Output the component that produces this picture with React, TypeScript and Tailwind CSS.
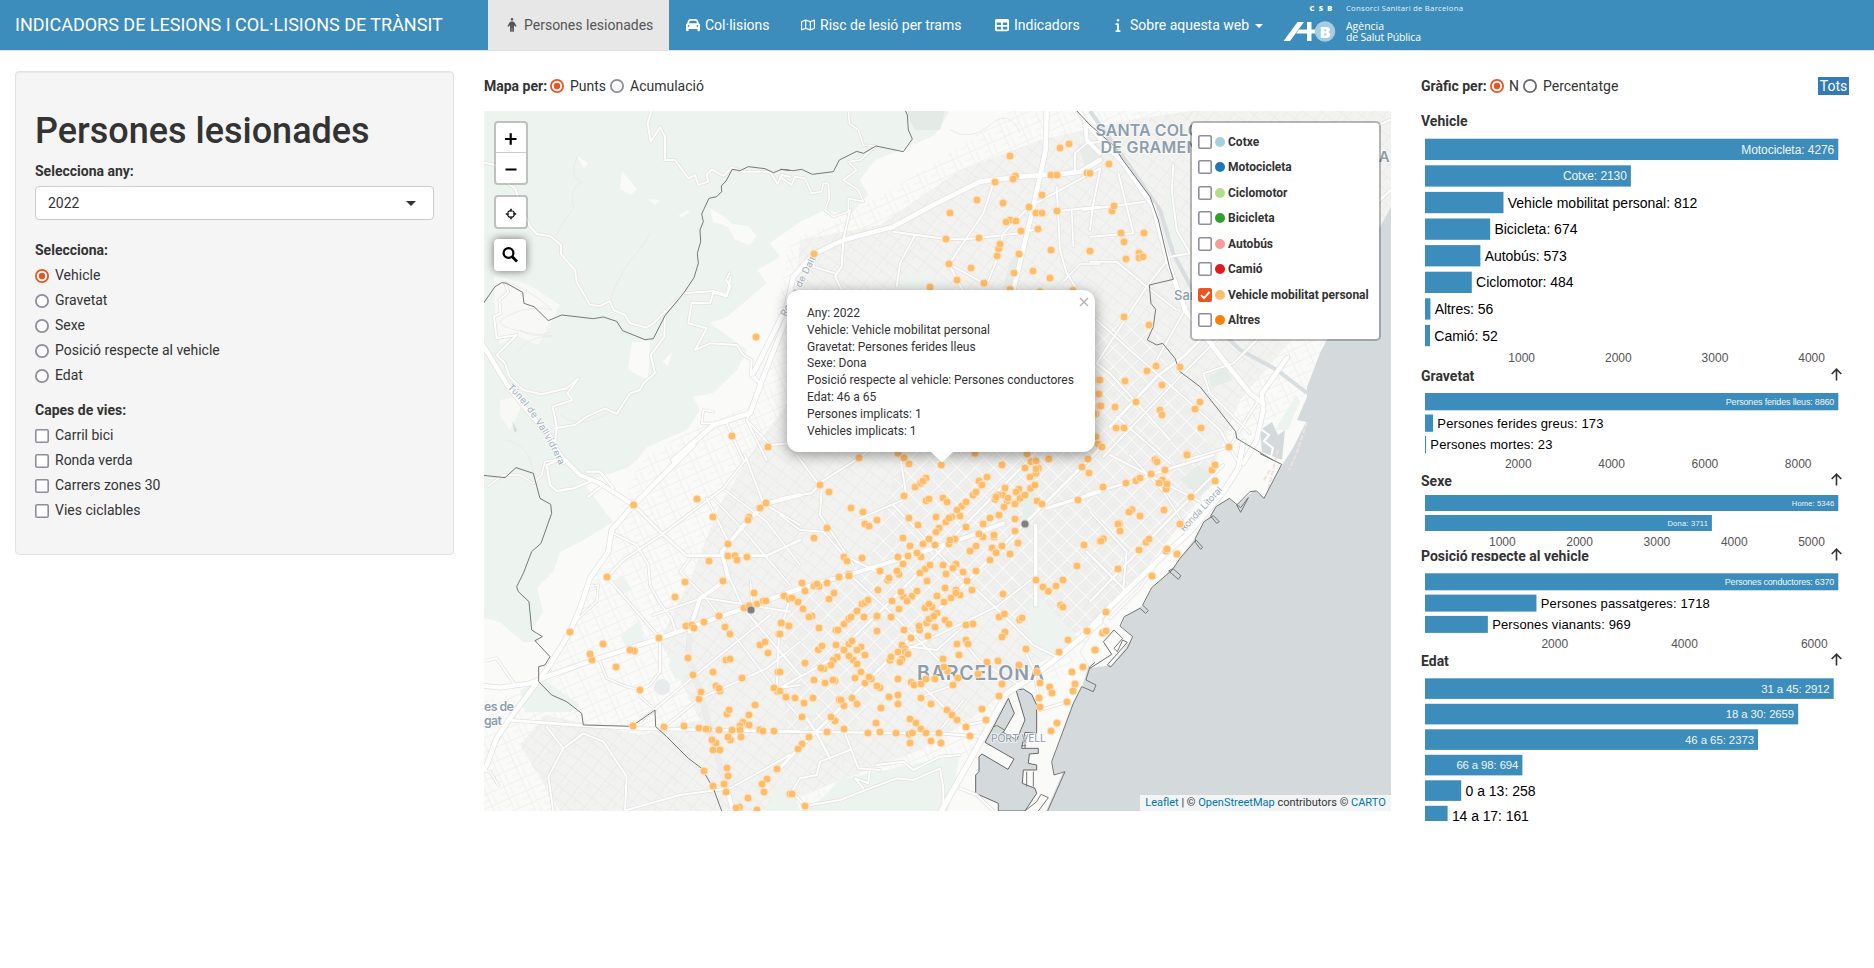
import type { ReactNode } from "react";
import { FaCar, FaInfo, FaPerson, FaRegMap, FaTable } from "react-icons/fa6";

type TileId = "a" | "b" | "c" | "d" | "e" | "f";

const TILES: Record<TileId, [number, number]> = {
  a: [480, 110],
  b: [780, 110],
  c: [1090, 110],
  d: [480, 455],
  e: [780, 455],
  f: [1090, 455],
};

const place = (id: TileId) => `translate(${TILES[id][0]} ${TILES[id][1]}) scale(0.33333)`;

const DOTS: Record<TileId, string> = {
  a: "828,681 756,978 864,1011",
  b: "690,138 840,114 867,102 813,195 831,195 921,189 645,216 706,198 699,207 786,255 591,270 669,279 510,309 747,291 768,309 786,309 831,303 690,330 678,336 708,333 723,363 774,357 498,387 597,384 656,417 660,402 651,438 717,432 813,420 930,423 507,462 573,474 102,432 702,489 759,483 810,504 531,510 612,519 450,531 690,538 780,545 879,541 957,810 957,852 959,888 948,912 948,980 957,1002",
  c: "57,162 0,190 66,303 72,288 93,369 102,396 162,369 0,423 147,429 147,443 159,440 108,447 102,621 177,645 198,768 171,783 270,771 30,810 105,813 216,825 27,852 33,888 75,891 138,876 210,900 216,915 330,876 315,897 12,912 78,954 102,954 333,954 18,981 24,1002 36,1011 417,1011 291,1032",
  d: "461,150 651,132 699,186 858,144 840,159 807,187 804,195 744,267 744,303 765,302 771,315 801,306 687,318 381,366 615,381 729,378 585,426 822,414 792,459 808,452 831,447 850,438 858,438 912,423 930,430 270,531 369,567 336,615 330,597 408,636 463,588 450,585 537,549 618,513 636,511 642,519 672,501 717,483 735,516 750,537 903,504 927,513 897,537 840,570 855,561 864,594 624,609 738,615 750,612 699,651 894,651 639,660 786,669 480,705 708,693 720,708 717,700 657,732 663,711 892,709 882,699 918,726 825,750 741,777 747,765 807,780 789,802 780,812 807,810 459,813 552,816 612,813 657,819 685,823 678,822 717,825 756,825 780,825 840,824 849,828 882,828 708,864 696,855 751,855 744,846 783,846 699,885 720,885 672,948 741,939 744,963 699,993 732,987 738,1011 891,942 861,972 846,987 852,1011 804,1029 778,1056 768,1059 831,1065 930,1017",
  e: "237,9 354,-5 372,9 387,27 484,30 585,-5 666,30 806,12 924,12 906,36 927,54 735,39 741,-3 753,20 768,18 775,40 768,55 768,42 750,66 120,90 147,111 405,96 438,69 422,85 429,78 372,123 438,137 447,132 489,129 501,141 597,78 621,66 606,90 579,120 588,111 645,133 675,99 668,120 655,120 648,126 682,138 684,129 717,102 708,111 720,130 735,120 752,100 765,90 705,147 672,156 771,138 786,147 894,135 213,159 249,171 291,195 255,207 267,213 387,189 414,210 468,186 515,186 498,201 507,189 540,183 545,154 531,165 558,141 657,180 630,189 609,207 705,192 558,216 477,219 468,231 141,219 102,249 369,249 447,252 429,267 465,270 507,267 525,252 510,255 609,246 597,237 642,246 642,240 705,228 714,264 912,270 960,258 390,273 588,273 570,288 636,279 666,273 648,293 690,297 354,306 384,303 423,306 411,294 369,327 192,306 201,318 246,309 630,315 300,348 357,358 351,348 435,342 450,330 420,354 489,330 498,357 528,327 519,339 549,351 588,348 891,333 207,358 207,363 177,366 66,384 75,408 102,393 117,394 111,387 141,384 323,376 327,369 441,378 561,378 576,405 768,375 789,396 805,409 828,393 849,375 294,405 370,425 363,411 396,424 381,438 411,408 495,399 471,423 492,441 513,429 528,405 540,420 528,414 669,417 12,423 28,432 36,429 54,441 69,462 162,414 147,432 336,438 357,462 246,447 255,443 264,435 231,468 435,459 456,456 447,447 842,450 849,456 657,486 673,477 96,483 87,486 206,492 213,486 252,486 290,486 291,483 333,486 192,507 168,526 174,525 471,474 440,504 447,492 462,483 495,495 507,507 4,504 27,513 117,519 419,525 417,513 465,516 558,510 579,507 719,495 726,489 372,525 291,528 675,531 666,546 393,549 444,543 921,528 0,537 864,555 531,567 558,555 564,567 537,600 115,584 126,573 168,570 207,567 216,558 192,585 243,576 231,585 366,570 375,582 354,591 376,590 384,597 738,582 837,591 945,585 220,615 207,603 231,627 255,600 330,616 333,606 366,612 360,621 172,606 160,616 153,630 489,612 621,621 654,618 132,641 123,639 75,624 0,651 243,651 717,630 502,648 492,636 594,657 771,651 876,651 909,636 102,675 135,684 165,677 159,675 225,669 255,684 274,672 267,666 300,698 291,693 354,672 394,682 402,690 423,687 438,672 465,672 534,669 519,690 666,687 780,684 809,696 816,714 885,687 879,708 0,708 18,726 45,729 72,744 99,729 178,734 192,752 183,735 216,729 231,747 327,726 354,720 354,747 303,759 423,729 453,747 501,765 657,723 777,729 861,741 780,756 516,780 531,795 606,762 618,795 66,786 165,798 153,786 390,792 408,804 423,822 288,804 300,831 264,834 192,822 141,831 348,834 388,838 397,834 438,834 477,834 558,816 570,843 831,804 813,828 390,864 453,858 483,864 87,846 66,867 54,882 36,1017 75,1053",
  f: "195,14 201,20 291,0 366,45 375,30 225,45 183,57 138,77 150,69 108,84 39,96 217,75 207,84 228,102 231,87 375,78 303,126 222,165 126,164 117,171 150,183 88,206 84,207 90,228 270,207 168,262 177,252 147,285 40,251 33,258 228,288 231,282 261,297 84,342 186,363 38,534 48,528 48,471 15,585",
};

const SELECTED: [TileId, number, number][] = [
  ["d", 813, 465],
  ["e", 735, 207],
];

const ROADS: [TileId, number, string][] = [
  // Collserola
  ["a", 6, "0,155 45,165 75,215 105,235 125,290 150,350 170,372 210,378 243,405 243,432 285,480 290,515 330,585 360,588 390,573 400,600 435,615 450,640 500,653 520,640 612,550 700,543 740,555 752,530 738,510 748,490"],
  ["a", 6, "515,0 503,40 512,95 540,52 555,80 555,150 585,150 625,205 645,195 655,225 685,215 680,195 695,178 730,198 755,172 790,185 870,185 893,222 905,195 930,200"],
  ["a", 6, "752,500 740,560 700,548 690,580 635,578 625,640 680,655 645,720 690,700 770,705 790,735 815,750 812,795 830,815"],
  ["a", 6, "555,617 553,680 512,735 525,790 490,820 480,840 450,850 410,912 375,895 320,920 285,945 225,955"],
  ["a", 6, "75,520 85,545 58,570 62,610 42,620 50,685 110,675 50,735 75,760 88,800 130,840 185,853 260,835 295,805 262,850 278,870 218,890 230,950 225,1010"],
  ["a", 5, "700,905 670,900 665,940 735,940"],
  ["a", 6, "740,940 790,1050"],
  ["a", 6, "825,800 845,830 800,930 860,1050"],
  ["a", 6, "800,930 870,1005 930,1000"],
  ["b", 5, "0,200 35,225 45,200 75,205 95,250 125,245 130,220 145,220 148,265 135,300 160,320 205,305 205,265 250,275 235,240 190,210 230,180 205,155 240,150 288,108 250,105 235,60 208,40 205,0"],
  ["b", 6, "210,300 190,390 185,470 165,500 185,540"],
  ["b", 6, "102,432 100,470 165,490"],
  ["b", 6, "340,365 498,387 560,388 720,370 790,352"],
  ["b", 6, "640,220 610,310 507,462 531,510 560,560"],
  ["b", 6, "507,462 620,525 650,450 670,370 747,291 960,175"],
  ["b", 6, "405,375 360,460 350,530"],
  ["b", 6, "830,230 840,420 860,490 905,560"],
  ["b", 6, "831,303 960,290"],
  ["b", 5, "850,515 900,462 960,462"],
  ["b", 5, "875,300 880,410"],
  ["b", 6, "885,190 885,130 920,100 960,95"],
  ["b", 14, "800,0 797,120 760,290 700,540 660,700"],
  ["b", 14, "-80,790 20,590 40,500 102,432 190,390 340,350 450,290 600,215 720,200 860,190 900,185 960,150"],
  ["b", 12, "880,-20 915,30 920,90 960,130"],
  ["a", 14, "580,1050 700,945 810,910 850,800 930,600"],
  ["a", 13, "0,690 30,740 85,830 140,900 210,980 250,1055"],
  ["d", 12, "220,-20 300,60 360,85 461,150"],
  ["d", 7, "235,15 200,30 210,90 230,108 280,100 340,75 370,90 325,125"],
  ["d", 7, "320,50 360,50 400,100"],
  ["d", 5, "22,95 70,60 120,60 160,85 185,60 195,20 240,12"],
  ["d", 14, "640,-30 560,50 461,150 395,225 385,290 330,370 300,460 270,531 210,630 150,710 90,790 50,850 20,930 0,960"],
  ["d", 13, "-10,690 60,698 150,685 200,665 340,615 540,550 720,485 850,440 960,400"],
  ["d", 8, "80,795 310,812 450,820 960,830"],
  ["d", 8, "461,150 545,235 620,302 860,302 960,255"],
  ["d", 12, "960,120 860,145 800,200 725,290 745,370 660,430 630,520 625,610 660,710 700,860 760,1070"],
  ["d", 6, "520,480 670,428 930,470"],
  ["d", 6, "400,235 470,270 505,330 510,390 540,445 575,490 585,525"],
  ["d", 6, "381,366 430,315 550,235 730,100 800,10"],
  ["d", 6, "381,366 540,550 540,650 510,690 480,705"],
  ["d", 5, "325,395 355,390 350,440 290,495"],
  ["d", 5, "360,620 380,670 440,695 480,705 480,725 525,765"],
  ["d", 5, "630,310 600,350 670,420 880,695 960,790"],
  ["d", 6, "745,360 790,460 960,660"],
  ["d", 6, "680,130 750,270"],
  ["d", 5, "700,130 790,225 930,390"],
  ["d", 5, "735,105 860,200 960,330"],
  ["d", 6, "795,0 850,145 960,210"],
  ["d", 6, "480,800 640,665 870,480"],
  ["d", 6, "552,816 660,730 860,640 960,560"],
  ["d", 6, "930,430 897,540 890,700 960,690"],
  ["d", 6, "0,620 50,610 105,690"],
  ["d", 6, "200,815 250,880 310,835 370,860 440,965 435,1070"],
  ["d", 6, "250,880 205,965 220,1070"],
  ["d", 6, "440,1065 600,1020 750,1000 930,900"],
  ["d", 5, "0,945 30,950 55,990"],
  ["d", 5, "812,380 815,450"],
  // Eixample
  ["e", 6, "0,130 95,115 125,80 237,9 290,-30"],
  ["e", 6, "50,0 125,100 120,180 220,330"],
  ["e", 6, "0,180 60,225 130,230 190,300 330,370"],
  ["e", 12, "0,423 110,385 210,358 400,300 550,250 670,205"],
  ["e", 7, "-20,710 150,615 340,430 770,-10"],
  ["e", 9, "-10,950 54,882 180,760 420,520 700,240 960,-20"],
  ["e", 7, "-10,830 480,835 600,845"],
  ["e", 6, "340,150 500,320 670,480 760,570 830,605"],
  ["e", 6, "200,350 340,480 480,620"],
  ["e", 6, "240,190 380,130 360,0"],
  ["e", 6, "380,585 650,455 765,365"],
  ["e", 11, "767,210 767,450"],
  ["e", 10, "800,160 960,110"],
  ["e", 6, "390,575 470,585 545,520"],
  ["e", 6, "550,560 600,620 720,690"],
  ["e", 6, "424,690 501,765 560,810 610,800"],
  ["e", 5, "424,725 520,690"],
  ["e", 5, "550,735 480,825"],
  ["e", 8, "80,790 110,835 150,910"],
  ["e", 6, "195,835 235,940 300,945"],
  ["e", 6, "210,885 120,920 110,960 60,970 35,1010 75,1053 180,1035 270,1000 350,970 400,975 480,940 490,1000 490,1068"],
  ["e", 6, "270,940 265,985 225,970 250,1000"],
  ["e", 6, "290,930 370,920 400,945 480,905 540,900"],
  ["e", 16, "480,1075 590,880 680,715 750,670 830,610 960,500"],
  ["e", 7, "780,765 861,741"],
  ["e", 6, "740,600 760,640 775,720 780,765"],
  ["e", 7, "540,1000 590,1020 640,1068"],
  ["f", 15, "-20,540 60,455 200,320 300,230 400,110 445,40 460,-40"],
  ["f", 8, "-10,118 110,85 225,45 370,0"],
  ["f", 7, "0,440 240,190 400,30"],
  ["f", 6, "60,0 330,140"],
  ["f", 6, "0,170 110,290 100,400"],
  ["f", 5, "120,0 220,110 290,220"],
  ["f", 7, "110,410 -10,290"],
  ["f", 6, "60,490 150,400 190,340 220,290"],
  ["c", 14, "-10,40 100,160 190,290 235,460 285,600 400,750 480,850 520,880"],
  ["c", 6, "-20,300 165,275"],
  ["c", 6, "30,180 10,280 0,360"],
  ["c", 6, "85,190 110,290 130,370 0,380"],
  ["c", 6, "240,440 300,430"],
  ["c", 6, "250,165 245,240 260,360 300,430"],
  ["c", 6, "0,455 80,455 170,530 260,600"],
  ["c", 6, "240,440 170,530 20,760"],
  ["c", 6, "20,630 120,720 280,860 390,960 440,1050"],
  ["c", 6, "20,760 60,790 240,990"],
  ["c", 9, "60,950 200,800 280,740 330,690"],
  ["c", 6, "40,1040 270,800 450,620"],
  ["c", 6, "80,920 240,1060"],
  ["c", 6, "200,750 290,590"],
  ["c", 6, "340,790 430,760 500,690"],
  ["c", 6, "340,790 360,850 480,970"],
  ["c", 6, "290,1050 420,1010 480,910 595,740"],
  ["c", 13, "460,1060 500,990 520,900 515,850 590,745"],
  ["c", 7, "640,150 900,30"],
  ["c", 8, "780,350 903,240"],
];

const BORDERS: [TileId, string][] = [
  ["a", "0,595 45,530 65,518 80,520 128,547 132,580 162,590 205,632 245,615 340,626 370,621 410,634 428,662 495,689 520,686 555,617 612,548 642,503 655,460 652,430 662,395 660,360 670,335 665,312 687,265 710,260 725,245 724,228 738,213 757,178 780,182 805,170 855,176 880,188 905,178 930,181"],
  ["b", "0,178 40,182 65,178 97,193 160,185 178,150 230,124 250,130 288,108 370,125 397,87 385,60 382,15 375,0"],
  ["b", "888,0 930,45"],
  ["c", "0,45 75,110 95,145 180,260 205,330 238,470 250,508 178,525 183,580 197,598 190,650 172,690 200,705 218,700 255,745 270,785 330,830 370,880 437,965 440,985 548,1050"],
  ["d", "0,60 75,68 108,38 160,55 180,130 212,148 215,175 183,265 155,290 130,355 110,395 115,410 147,440 155,525 187,545 165,557 210,605 195,630 176,635 176,680 215,720 260,740 305,775 310,810 455,814 525,765 527,815 560,845 625,910 665,940 700,1000 725,1068"],
  ["f", "510,-4 575,28 522,130 500,108 480,110 440,150 452,172 475,128 452,158 418,130 378,155 362,183 380,205 388,200 370,182 342,200 316,250 316,262 332,283 338,277 318,255 270,310 250,340 236,348 265,373 273,362 250,342 185,398 158,450 175,467 167,475 150,460 103,485 90,513 128,545 112,580 62,636 52,630 112,562 98,555 82,590 72,580 98,550 72,525 40,560 65,598 0,640"],
  ["e", "945,622 930,635 918,675 948,690 940,710 905,695 880,745 815,920 822,960 855,950 803,1068"],
  ["e", "775,1068 805,1028 783,1018 770,1040 735,1068"],
];

const PORT =
  "685,730 703,775 670,832 710,855 735,795 708,705 730,702 755,718 770,750 770,835 735,832 725,880 775,880 775,895 748,897 745,925 770,930 770,945 730,945 727,985 765,1000 770,1015 735,1068 655,1068 655,1045 587,1015 587,960 597,950 597,905 606,897 684,943 702,912 615,862 640,816";

const HALF_BLOCKS = "M0 0H13M0 0V13";

function MapCanvas() {
  return (
    <svg viewBox="484 111 907 700" className="block h-[700px] w-[907px]">
      <defs>
        <pattern id="grid" width="13" height="13" patternUnits="userSpaceOnUse" patternTransform="rotate(45 940 600)">
          <rect width="13" height="13" fill="#efefee" />
          <path d="M2 6.5H13M7.5 2V13" stroke="#ebebea" strokeWidth="0.8" />
          <path d={HALF_BLOCKS} stroke="#e7e7e6" strokeWidth="3.2" />
          <path d={HALF_BLOCKS} stroke="#fbfbfb" strokeWidth="2" />
        </pattern>
        <pattern id="lanes" width="17" height="11" patternUnits="userSpaceOnUse" patternTransform="rotate(38)">
          <path d="M0 .5H17M5.5 0V11M11.5 0V6" stroke="#eaeae9" strokeWidth="0.8" fill="none" />
        </pattern>
        <pattern id="lanes2" width="19" height="13" patternUnits="userSpaceOnUse" patternTransform="rotate(-24)">
          <path d="M0 .5H19M7.5 0V13M13 3V13M0 7H8" stroke="#efefee" strokeWidth="0.8" fill="none" />
        </pattern>
      </defs>
      <rect x="484" y="111" width="907" height="700" fill="#fafaf8" />
      <polygon points="640,460 690,430 760,400 790,240 830,225 940,160 1010,111 1391,111 1391,350 1220,450 1060,680 900,811 484,811 484,700 545,690 600,560" fill="url(#lanes2)" />
      <polygon
        points="720,505 760,440 790,400 800,240 880,225 960,170 1040,140 1130,120 1190,111 1391,111 1391,230 1300,330 1240,400 1200,500 1080,630 970,720 920,750 760,811 560,811 520,745 545,715 640,735 700,720 660,640 690,580"
        fill="#f2f2f1"
      />
      <polygon
        points="720,505 760,440 790,400 800,240 880,225 960,170 1040,140 1130,120 1190,111 1391,111 1391,230 1300,330 1240,400 1200,500 1080,630 970,720 920,750 760,811 560,811 520,745 545,715 640,735 700,720 660,640 690,580"
        fill="url(#lanes)"
      />
      <polygon points="785,600 870,560 900,455 960,440 1080,330 1150,320 1190,400 1215,460 1200,500 1100,625 1040,640 960,590 890,670 850,735 785,735" fill="url(#grid)" />
      <g fill="#edf3ee">
        <path d="M484 111H950L935 135 900 150 875 160 860 180 868 195 850 215 825 210 800 222 770 243 780 257 757 270 767 283 727 317 710 323 747 350 737 370 713 393 693 397 700 410 687 430 647 447 637 460 627 468 583 482 613 522 580 542 560 552 553 572 537 588 543 612 533 628 540 642 523 642 500 622 484 618Z" />
        <path d="M905 111H945L940 130 915 130Z" fill="#e4ebe6" />
        <path d="M903 278L920 272 945 280 955 292H900Z" />
        <path d="M1020 250L1012 285 1002 290 1010 262Z" fill="#e6ede8" />
        <path d="M1078 145L1095 140 1105 160 1085 167Z" fill="#e6ede8" />
        <path d="M1163 180L1178 220 1190 250 1182 260 1168 225Z" />
        <path d="M1208 378L1225 366 1232 380 1212 388Z" fill="#e6ede8" />
        <path d="M1180 480L1198 465 1218 480 1200 496Z" fill="#e6ede8" />
        <path d="M1025 495L1036 490 1034 520 1022 518Z" fill="#e8efe9" />
        <path d="M1030 605L1040 597 1080 640 1060 660 1022 645Z" />
        <path d="M820 800L840 780 910 765 960 755 948 811H800Z" />
        <path d="M800 710L815 700 822 708 812 716Z" />
        <path d="M520 690L545 680 580 705 570 712 525 712Z" />
        <path d="M620 635L640 620 645 645 628 650Z" />
        <path d="M612 582L622 575 632 590 618 595Z" />
        <path d="M668 665L680 650 690 672 676 680Z" />
        <path d="M775 790L790 778 800 811H765Z" />
        <path d="M1275 430L1296 395 1300 401 1288 430Z" />
      </g>
      <g fill="#fafaf8">
        <path d="M622 171L630 181 637 189 631 195 620 189Z" />
        <path d="M576 155L588 163 584 169Z" />
        <path d="M648 199L660 200 655 205Z" />
        <path d="M678 216L688 210 690 212 682 217Z" />
        <path d="M710 208L713 222 728 227 735 240 750 245 757 236 748 226 733 224 723 216Z" />
        <path d="M494 275L530 285 560 305 552 320 538 345 515 335 500 345 495 320Z" opacity=".8" />
        <path d="M632 342L650 341 648 380 628 370Z" />
        <path d="M662 362L672 352 668 366Z" />
        <path d="M500 400L525 395 520 410 510 430 500 415Z" opacity=".8" />
      </g>
      <path d="M512 421L517 430 515 433Z" fill="#d4dadc" />
      <g fill="none" stroke="#e7e8e6" strokeWidth="0.8">
        <path d="M578 155q-10 22 4 27q-14 6-8 27q-9 8-18 27M650 233q-9 17-19 26q-8 12-17 30q-3 8-3 14M500 280q30 8 52 30q-20-6-45 6t45 20q-24 0-35 16" />
        <path d="M560 415q18 12 36 4t30-14M505 440q25 4 28 32M520 330q14 10 30 2M950 130q20 12 40-5t30 8" />
      </g>
      <path
        d="M1090 111L1123 157 1160 210 1173 253 1207 317 1240 350 1277 370 1307 393"
        fill="none"
        stroke="#d8dddf"
        strokeWidth="4"
      />
      <polygon
        points="1391,207 1380,227 1340,310 1327,340 1320,353 1307,387 1307,397 1297,420 1306,422 1293,448 1282,465 1264,498 1255,490 1236,505 1229,498 1216,507 1210,516 1204,522 1195,538 1180,558 1173,568 1152,588 1143,605 1125,617 1121,626 1133,637 1112,665 1090,668 1090,660 1082,687 1073,703 1052,762 1054,775 1063,772 1046,811 1391,811"
        fill="#d4dadc"
      />
      <polygon points="1260,430 1272,422 1278,435 1285,430 1282,460 1262,452" fill="#d4dadc" />
      <path d="M1250 438l12-8 7 5-5 6 9 7-4 17" fill="none" stroke="#fff" strokeWidth="2" />
      <path d="M1307 422l-9 28-9 20M1278 450l-10 40M1270 470l-7 12" fill="none" stroke="#efe0e2" strokeWidth="2" strokeDasharray="5 2" />
      <g stroke="#d6dbdd" strokeWidth="0.5" fill="#fafaf8">
        <polygon points="1114,632 1104,642 1112,655 1090,668 1080,652 1100,620" />
        <path d="M1132 640L1111 666 1108 663 1127 645Z" />
      </g>
      <g transform={place("e")}>
        <polygon points={PORT} fill="#d4dadc" stroke="#666" strokeWidth="3" />
        <path d="M640 816l10-5 25 15M668 832l-8 6M735 840v40M728 850h12M726 862h14M724 872h14M740 950v45M760 950v45" stroke="#777" strokeWidth="3" fill="none" />
      </g>
      <g fill="none" strokeLinejoin="round" strokeLinecap="round">
        {ROADS.map(([tile, w, pts], i) => (
          <polyline key={i} transform={place(tile)} points={pts} stroke="#e0e0e0" strokeWidth={w + 4} />
        ))}
        {ROADS.map(([tile, w, pts], i) => (
          <polyline key={i} transform={place(tile)} points={pts} stroke="#fefefe" strokeWidth={w} />
        ))}
        <polyline transform={place("d")} points="628,540 628,610 662,711 700,860 745,1010" stroke="#ececec" strokeWidth="14" />
      </g>
      <circle cx="662" cy="687" r="8" fill="#e8eaeb" />
      <g fill="none" stroke="#6f6f6f" strokeWidth="2.8">
        {BORDERS.map(([tile, pts], i) => (
          <polyline key={i} transform={place(tile)} points={pts} />
        ))}
      </g>
      <g fill="#8d9daa" fontFamily="Inter, sans-serif" stroke="#fff" strokeOpacity=".6" strokeWidth="2" paintOrder="stroke">
        <text x="1095.5" y="136" fontSize="16" fontWeight="600" textLength="131">SANTA COLOMA</text>
        <text x="1100.5" y="153" fontSize="16" fontWeight="600" textLength="119">DE GRAMENET</text>
        <text x="1368.5" y="161.500" fontSize="15" fontWeight="600">DA</text>
        <text x="1174" y="300" fontSize="13" fontWeight="500">Sant</text>
        <text x="484" y="710.500" fontSize="12.500" fontWeight="600" textLength="30">es de</text>
        <text x="484" y="724.500" fontSize="12.500" fontWeight="600" textLength="18">gat</text>
        <text x="917" y="679.500" fontSize="19.500" fontWeight="600" textLength="127">BARCELONA</text>
        <text x="991" y="741.500" fontSize="10.500" textLength="55">PORT VELL</text>
        <path id="tunel" d="M507 388Q541 418 572 494" stroke="none" fill="none" />
        <g fontSize="9.500" fill="#93a5b3" fillOpacity=".9">
          <text>
            <textPath href="#tunel" textLength="94">Túnel de Vallvidrera</textPath>
          </text>
          <text transform="translate(1184 532) rotate(-47)" textLength="57">Ronda Litoral</text>
          <text transform="translate(786 317) rotate(-63)" textLength="66">Ronda de Dalt</text>
        </g>
      </g>
      <g fill="#ffbc69" stroke="#ffe2bd" strokeOpacity=".85" strokeWidth="3.4">
        {(Object.keys(TILES) as TileId[]).map((tile) => (
          <g key={tile} transform={place(tile)}>
            {DOTS[tile].split(" ").map((p, i) => {
              const [x, y] = p.split(",");
              return <circle key={i} cx={x} cy={y} r="11.500" />;
            })}
          </g>
        ))}
        {SELECTED.map(([tile, x, y]) => (
          <circle key={tile} transform={place(tile)} cx={x} cy={y} r="11.500" fill="#808080" stroke="#c4c4c4" />
        ))}
      </g>
    </svg>
  );
}

function Radio({ on, dark }: { on?: boolean; dark?: boolean }) {
  return (
    <svg viewBox="0 0 14 14" className="size-[14px] shrink-0">
      <circle cx="7" cy="7" r="6.100" fill="#fff" stroke={on ? "#e95420" : dark ? "#6b6875" : "#8f8c9c"} strokeWidth="1.800" />
      {on && <circle cx="7" cy="7" r="3.200" fill="#e95420" />}
    </svg>
  );
}

function Check({ on }: { on?: boolean }) {
  return (
    <svg viewBox="0 0 14 14" className="size-[14px] shrink-0">
      {on ? (
        <>
          <rect width="14" height="14" rx="2" fill="#e95420" />
          <path d="M3 7.200L6 10.200 11.500 4" stroke="#fff" strokeWidth="1.900" fill="none" />
        </>
      ) : (
        <rect x=".8" y=".8" width="12.400" height="12.400" rx="1.300" fill="#fff" stroke="#8f8c9c" strokeWidth="1.600" />
      )}
    </svg>
  );
}

function NavItem({ icon, label, className }: { icon: ReactNode; label: string; className: string }) {
  return (
    <li className={`flex h-[50px] items-center whitespace-nowrap pl-[15px] ${className}`}>
      <span className="mr-[3.5px] flex w-[17.5px] shrink-0 justify-center text-[14px]">{icon}</span>
      <span>{label}</span>
    </li>
  );
}

function Logo() {
  return (
    <svg viewBox="0 0 190 50" className="block h-[50px] w-[190px]" fill="#fff">
      <path d="M3.600 41L17.500 22H24L10 41Z" />
      <path d="M19 29.500H27V22H31.500V29.500H40V33.500H31.500V41H27V33.500H16Z" />
      <circle cx="45" cy="31.500" r="10.200" fill="#a5cde3" />
      <text x="39.600" y="37.500" fontFamily="Open Sans, sans-serif" fontWeight="800" fontSize="16.500">B</text>
      <g fontFamily="Open Sans, sans-serif">
        <text x="29.500" y="10.800" fontSize="7.500" fontWeight="800" letterSpacing="4.300">CSB</text>
        <text x="66" y="11" fontSize="7.800" textLength="117" fillOpacity=".9">Consorci Sanitari de Barcelona</text>
        <text x="66" y="30" fontSize="10.400" textLength="38">Agència</text>
        <text x="66" y="41" fontSize="10.400" textLength="75">de Salut Pública</text>
      </g>
    </svg>
  );
}

function Header() {
  return (
    <header className="flex h-[51px] border-b border-[#dfe3e6] bg-[#3c8dbc] text-[14px] text-white">
      <div className="flex h-[50px] w-[488px] shrink-0 items-center pl-[15px] text-[18px] whitespace-nowrap">
        INDICADORS DE LESIONS I COL·LISIONS DE TRÀNSIT
      </div>
      <ul className="flex h-[50px]">
        <NavItem icon={<FaPerson />} label="Persones lesionades" className="w-[181px] bg-[#e7e7e7] text-[#555]" />
        <NavItem icon={<FaCar />} label="Col·lisions" className="w-[115px]" />
        <NavItem icon={<FaRegMap />} label="Risc de lesió per trams" className="w-[194px]" />
        <NavItem icon={<FaTable />} label="Indicadors" className="w-[116px]" />
        <NavItem icon={<FaInfo />} label="Sobre aquesta web" className="w-[159px]" />
      </ul>
      <div className="flex h-[50px] w-[27px] items-center">
        <span className="ml-[2px] mt-[2px] border-x-4 border-t-4 border-x-transparent border-t-white" />
      </div>
      <Logo />
    </header>
  );
}

const MODES = ["Vehicle", "Gravetat", "Sexe", "Posició respecte al vehicle", "Edat"];
const LAYERS = ["Carril bici", "Ronda verda", "Carrers zones 30", "Vies ciclables"];

function Sidebar() {
  return (
    <aside className="h-[484px] w-[439px] shrink-0 rounded border border-[#e3e3e3] bg-[#f5f5f5] px-[19px] pt-[39px] shadow-[inset_0_1px_1px_rgba(0,0,0,0.05)]">
      <h1 className="mb-[10px] h-[40px] text-[36px] leading-[40px] font-medium">Persones lesionades</h1>
      <div className="h-[20px] font-bold">Selecciona any:</div>
      <div className="mt-[5px] flex h-[34px] items-center justify-between rounded border border-[#ccc] bg-white pr-[17px] pl-[12px]">
        <span>2022</span>
        <span className="border-x-[5px] border-t-[5px] border-x-transparent border-t-[#333]" />
      </div>
      <div className="mt-[20px] mb-[5px] h-[20px] font-bold">Selecciona:</div>
      {MODES.map((m, i) => (
        <div key={m} className="mb-[5px] flex h-[20px] items-center gap-[6px]">
          <span className="mt-[2px]">
            <Radio on={i === 0} />
          </span>
          {m}
        </div>
      ))}
      <div className="mt-[15px] mb-[5px] h-[20px] font-bold">Capes de vies:</div>
      {LAYERS.map((m) => (
        <div key={m} className="mb-[5px] flex h-[20px] items-center gap-[6px]">
          <span className="mt-[2px]">
            <Check />
          </span>
          {m}
        </div>
      ))}
    </aside>
  );
}

const LEGEND: [string, string][] = [
  ["Cotxe", "#a6cee3"],
  ["Motocicleta", "#1f78b4"],
  ["Ciclomotor", "#b2df8a"],
  ["Bicicleta", "#33a02c"],
  ["Autobús", "#fb9a99"],
  ["Camió", "#e31a1c"],
  ["Vehicle mobilitat personal", "#fdbf6f"],
  ["Altres", "#ff7f00"],
];

const POPUP = [
  "Any: 2022",
  "Vehicle: Vehicle mobilitat personal",
  "Gravetat: Persones ferides lleus",
  "Sexe: Dona",
  "Posició respecte al vehicle: Persones conductores",
  "Edat: 46 a 65",
  "Persones implicats: 1",
  "Vehicles implicats: 1",
];

function MapPanel() {
  return (
    <div className="relative h-[700px] w-[907px] overflow-hidden">
      <MapCanvas />
      <div className="absolute top-[10px] left-[10px] flex flex-col">
        <div className="h-[64px] w-[34px] rounded border-2 border-black/20 bg-white bg-clip-padding">
          <svg viewBox="0 0 30 60" className="block h-[60px] w-[30px]" stroke="#000" strokeWidth="2.200">
            <path d="M9 16H20.500M14.700 10.200V21.800M9.500 46.500H20.500" />
            <path d="M0 29.500H30" stroke="#ccc" strokeWidth="1" />
          </svg>
        </div>
        <div className="mt-[10px] flex h-[34px] w-[34px] items-center justify-center rounded border-2 border-black/20 bg-white bg-clip-padding">
          <svg viewBox="0 0 12 12" className="mt-[3px] size-[12px]" fill="none" stroke="#000">
            <circle cx="6" cy="6" r="3.500" strokeWidth="1.200" strokeDasharray="3.600 1.900" strokeDashoffset="-.95" />
            <path d="M6 .8V3.800M6 8.200V11.200M.8 6H3.800M8.200 6H11.200" strokeWidth="1.500" />
          </svg>
        </div>
        <div className="mt-[10px] flex h-[32px] w-[32px] items-center justify-center rounded bg-white shadow-[0_0_8px_rgba(0,0,0,0.55)]">
          <svg viewBox="0 0 18 18" className="size-[18px]" fill="none" stroke="#000">
            <circle cx="7.500" cy="7" r="4.900" strokeWidth="2.200" />
            <path d="M11 10.500L16 15.500" strokeWidth="2.800" />
          </svg>
        </div>
      </div>

      <ul className="absolute top-[10px] right-[10px] flex h-[220px] w-[191px] flex-col rounded-[5px] border-2 border-black/25 bg-white bg-clip-padding pt-[6px] pl-[6px] text-[12px] font-bold">
        {LEGEND.map(([name, color], i) => (
          <li key={name} className="flex h-[25.5px] items-center whitespace-nowrap">
            <Check on={i === 6} />
            <span className="mr-[3px] ml-[3px] size-[10px] rounded-full" style={{ backgroundColor: color }} />
            {name}
          </li>
        ))}
      </ul>

      <div className="absolute top-[179px] left-[303px] h-[162px] w-[308px] rounded-xl bg-white px-[20px] pt-[15px] text-[12px] leading-[16.8px] whitespace-nowrap shadow-[0_3px_14px_rgba(0,0,0,0.4)]">
        {POPUP.map((t) => (
          <div key={t}>{t}</div>
        ))}
        <svg viewBox="0 0 10 10" className="absolute top-[7px] right-[6px] size-[10px]" stroke="#b5b5b5" strokeWidth="1.500">
          <path d="M1 1L9 9M9 1L1 9" />
        </svg>
        <svg viewBox="0 0 24 12" className="absolute top-[161px] left-[143px] h-[12px] w-[24px]">
          <path d="M0 0H24L12 11.500Z" fill="#fff" />
        </svg>
      </div>

      <div className="absolute right-0 bottom-0 flex h-[16px] w-[251px] items-center justify-center bg-white/70 text-[11px] whitespace-pre text-[#333]">
        <span className="text-[#0078a8]">Leaflet</span> | © <span className="text-[#0078a8]">OpenStreetMap</span> contributors ©{" "}
        <span className="text-[#0078a8]">CARTO</span>
      </div>
    </div>
  );
}

interface ChartSpec {
  title: string;
  arrow: boolean;
  height: number;
  first: number;
  pitch: number;
  bar: number;
  scale: number;
  inner: number;
  outer: number;
  rows: [string, number, boolean, number][];
  step: number;
  ticks: number;
  axis: number;
}

// Label widths are kept next to each row: [name, value, label inside the bar, width].
const CHARTS: ChartSpec[] = [
  {
    title: "Vehicle", arrow: false, height: 255, first: 27.7, pitch: 26.6, bar: 21.3, scale: 413.3 / 4276, inner: 12, outer: 14,
    rows: [["Motocicleta", 4276, true, 93], ["Cotxe", 2130, true, 64], ["Vehicle mobilitat personal", 812, false, 189.5], ["Bicicleta", 674, false, 83], ["Autobús", 573, false, 82], ["Ciclomotor", 484, false, 97.5], ["Altres", 56, false, 58.5], ["Camió", 52, false, 63.5]],
    step: 1000, ticks: 4, axis: 247,
  },
  {
    title: "Gravetat", arrow: true, height: 105, first: 27, pitch: 21.5, bar: 17.3, scale: 413.3 / 8860, inner: 9, outer: 13,
    rows: [["Persones ferides lleus", 8860, true, 108.5], ["Persones ferides greus", 173, false, 166], ["Persones mortes", 23, false, 122]],
    step: 2000, ticks: 4, axis: 98,
  },
  {
    title: "Sexe", arrow: true, height: 75, first: 24, pitch: 20, bar: 16, scale: 413.3 / 5346, inner: 7.6, outer: 12,
    rows: [["Home", 5346, true, 42.5], ["Dona", 3711, true, 40.5]],
    step: 1000, ticks: 5, axis: 71,
  },
  {
    title: "Posició respecte al vehicle", arrow: true, height: 105, first: 27.3, pitch: 21.3, bar: 17, scale: 413.3 / 6370, inner: 9, outer: 13,
    rows: [["Persones conductores", 6370, true, 109.5], ["Persones passatgeres", 1718, false, 169], ["Persones vianants", 969, false, 138.5]],
    step: 2000, ticks: 3, axis: 98,
  },
  {
    title: "Edat", arrow: true, height: 170, first: 27.3, pitch: 25.5, bar: 20.6, scale: 408.7 / 2912, inner: 11.4, outer: 14,
    rows: [["31 a 45", 2912, true, 68.5], ["18 a 30", 2659, true, 68.5], ["46 a 65", 2373, true, 69], ["66 a 98", 694, true, 62], ["0 a 13", 258, false, 70], ["14 a 17", 161, false, 77]],
    step: 1000, ticks: 0, axis: 0,
  },
];

function Chart({ c }: { c: ChartSpec }) {
  return (
    <section>
      <div className="flex h-[15px] justify-between overflow-hidden pr-[12px]">
        <h2 className="h-[20px] font-bold">{c.title}</h2>
        {c.arrow && (
          <svg viewBox="0 0 11 13" className="mt-[1.500px] h-[13px] w-[11px]" fill="none" stroke="#333" strokeWidth="1.600">
            <path d="M5.500 12.500V1.200M.7 6L5.500 1.200 10.300 6" />
          </svg>
        )}
      </div>
      <svg
        width="433"
        height={c.height - 15}
        viewBox={`0 15 433 ${c.height - 15}`}
        className="block"
        fontFamily="Liberation Sans, Arial, sans-serif"
      >
        {c.rows.map(([name, value, inside, w], i) => {
          const y = c.first + i * c.pitch;
          const len = value * c.scale;
          const size = inside ? c.inner : c.outer;
          return (
            <g key={name}>
              <rect x="4" y={y} width={len} height={c.bar} fill="#3c8dbc" />
              <text
                x={inside ? len - w : len + 8.3}
                y={y + c.bar / 2 + size * 0.36}
                fontSize={size}
                textLength={w}
                fill={inside ? "#f1f5f8" : "#000"}
              >
                {name}: {value}
              </text>
            </g>
          );
        })}
        {Array.from({ length: c.ticks }, (_, i) => (
          <text key={i} x={4 + (i + 1) * c.step * c.scale} y={c.axis + 4} fontSize="12" textAnchor="middle" fill="#555">
            {(i + 1) * c.step}
          </text>
        ))}
      </svg>
    </section>
  );
}

export default function App() {
  return (
    <div className="min-h-[968px] w-[1874px] bg-white font-['Roboto',sans-serif] text-[14px] leading-[20px] text-[#333]">
      <Header />
      <main className="flex gap-[30px] px-[15px] pt-[20px]">
        <Sidebar />
        <div className="w-[907px] shrink-0">
          <div className="mb-[15px] flex h-[25px] items-center pt-[5px]">
            <b className="w-[66px]">Mapa per:</b>
            <Radio on />
            <span className="ml-[6px] w-[40px]">Punts</span>
            <Radio />
            <span className="ml-[6px]">Acumulació</span>
          </div>
          <MapPanel />
        </div>
        <div className="w-[433px] shrink-0">
          <div className="mb-[15px] flex h-[25px] items-center pt-[5px]">
            <b className="w-[69px]">Gràfic per:</b>
            <Radio on />
            <span className="ml-[5px] w-[14px]">N</span>
            <Radio dark />
            <span className="ml-[6px]">Percentatge</span>
            <span className="mr-[5px] ml-auto flex h-[18px] w-[31px] items-center justify-center bg-[#337ab7] text-white">Tots</span>
          </div>
          {CHARTS.map((c) => (
            <Chart key={c.title} c={c} />
          ))}
        </div>
      </main>
    </div>
  );
}
